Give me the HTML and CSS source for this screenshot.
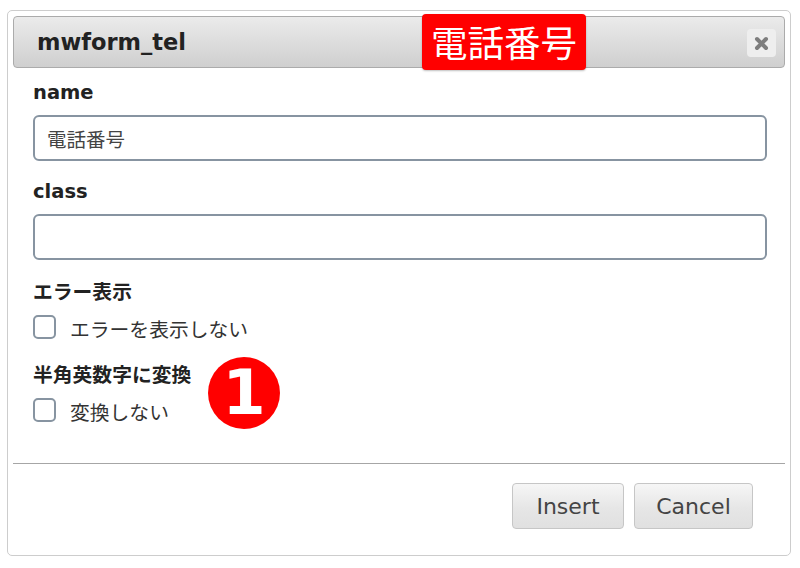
FILE: index.html
```html
<!DOCTYPE html>
<html lang="ja">
<head>
<meta charset="utf-8">
<title>mwform_tel</title>
<link rel="stylesheet" href="styles.css">
</head>
<body>
<div class="dialog">
  <div class="header">
    <span class="title">mwform_tel</span>
    <span class="close">
      <svg width="15" height="15" viewBox="0 0 15 15"><path d="M3 3 L12 12 M12 3 L3 12" stroke="#7d7d7d" stroke-width="4" stroke-linecap="round" fill="none"/></svg>
    </span>
  </div>
  <div class="body">
    <div class="label label-first">name</div>
    <div class="input"><span class="input-text">電話番号</span></div>
    <div class="label label-class">class</div>
    <div class="input"></div>
    <div class="label label-jp label-err">エラー表示</div>
    <div class="check-row"><span class="box"></span><span class="check-text">エラーを表示しない</span></div>
    <div class="label label-jp label-conv">半角英数字に変換</div>
    <div class="check-row"><span class="box"></span><span class="check-text">変換しない</span></div>
  </div>
  <div class="sep"></div>
  <div class="footer">
    <span class="btn btn-insert">Insert</span>
    <span class="btn btn-cancel">Cancel</span>
  </div>
  <div class="tag">電話番号</div>
  <div class="badge">1</div>
</div>
</body>
</html>
```

FILE: styles.css
```css
html, body {
  margin: 0;
  padding: 0;
  background: #ffffff;
}
body {
  font-family: "DejaVu Sans", "Noto Sans CJK JP", sans-serif;
  color: #222;
}
.dialog {
  position: relative;
  margin: 10px 0 0 7px;
  width: 784px;
  height: 546px;
  box-sizing: border-box;
  border: 1px solid #cdcdcd;
  border-radius: 5px;
  padding: 5px;
}
.header {
  height: 52px;
  box-sizing: border-box;
  border: 1px solid #ababab;
  border-radius: 4px;
  background: linear-gradient(#ebebeb, #cfcfcf);
  display: flex;
  align-items: center;
  justify-content: space-between;
  padding: 0 8px 0 23px;
}
.title {
  font-family: "DejaVu Sans", sans-serif;
  font-weight: bold;
  font-size: 22.5px;
  color: #222;
  line-height: 26px;
  margin-top: -1px;
}
.close {
  width: 29px;
  height: 28px;
  border-radius: 4px;
  background: #eeeeee;
  display: flex;
  align-items: center;
  justify-content: center;
  margin-top: 2px;
}
.body {
  padding: 0 18px 0 20px;
}
.label {
  font-family: "DejaVu Sans", "Noto Sans CJK JP", sans-serif;
  font-weight: bold;
  font-size: 19.5px;
  line-height: 24px;
  color: #222;
}
.label-jp {
  font-family: "Noto Sans CJK JP", sans-serif;
  font-size: 19.8px;
}
.label-first { margin-top: 13px; }
.label-class { margin-top: 19px; }
.label-err { margin-top: 19px; }
.label-conv { margin-top: 23px; }
.input {
  margin-top: 10px;
  height: 46px;
  box-sizing: border-box;
  border: 2px solid #8794a1;
  border-radius: 6px;
  display: flex;
  align-items: center;
  padding-left: 12px;
}
.input-text {
  font-family: "Noto Sans CJK JP", sans-serif;
  font-size: 19.5px;
  color: #444;
}
.check-row {
  margin-top: 12px;
  height: 24px;
  display: flex;
  align-items: center;
}
.box {
  width: 23px;
  height: 24px;
  box-sizing: border-box;
  border: 2px solid #8794a1;
  border-radius: 5px;
}
.check-text {
  margin-left: 14px;
  font-family: "Noto Sans CJK JP", sans-serif;
  font-size: 19.8px;
  color: #333;
  margin-top: 3px;
}
.sep {
  margin-top: 41px;
  height: 0;
  border-top: 1.5px solid #a6a6a6;
}
.footer {
  margin-top: 19px;
  display: flex;
  justify-content: flex-end;
  gap: 10px;
  padding-right: 32px;
}
.btn {
  height: 46px;
  box-sizing: border-box;
  border: 1px solid #c6c6c6;
  border-radius: 4px;
  background: linear-gradient(#f6f6f6, #e6e6e6 55%, #e0e0e0);
  display: flex;
  align-items: center;
  justify-content: center;
  font-family: "DejaVu Sans", sans-serif;
  font-size: 22px;
  color: #444;
}
.btn-insert { width: 112px; }
.btn-cancel { width: 119px; }
.tag {
  position: absolute;
  left: 414px;
  top: 3px;
  width: 164px;
  height: 56px;
  background: #ff0000;
  border-radius: 4px;
  box-shadow: 0 1px 2px rgba(0,0,0,0.25);
  color: #fff;
  font-family: "Noto Sans CJK JP", sans-serif;
  font-size: 36.5px;
  line-height: 56px;
  text-align: center;
}
.badge {
  position: absolute;
  left: 200px;
  top: 346px;
  width: 72px;
  height: 72px;
  border-radius: 50%;
  background: #ff0000;
  color: #fff;
  font-family: "DejaVu Sans", sans-serif;
  font-weight: bold;
  font-size: 62px;
  line-height: 72px;
  text-align: center;
}
```
